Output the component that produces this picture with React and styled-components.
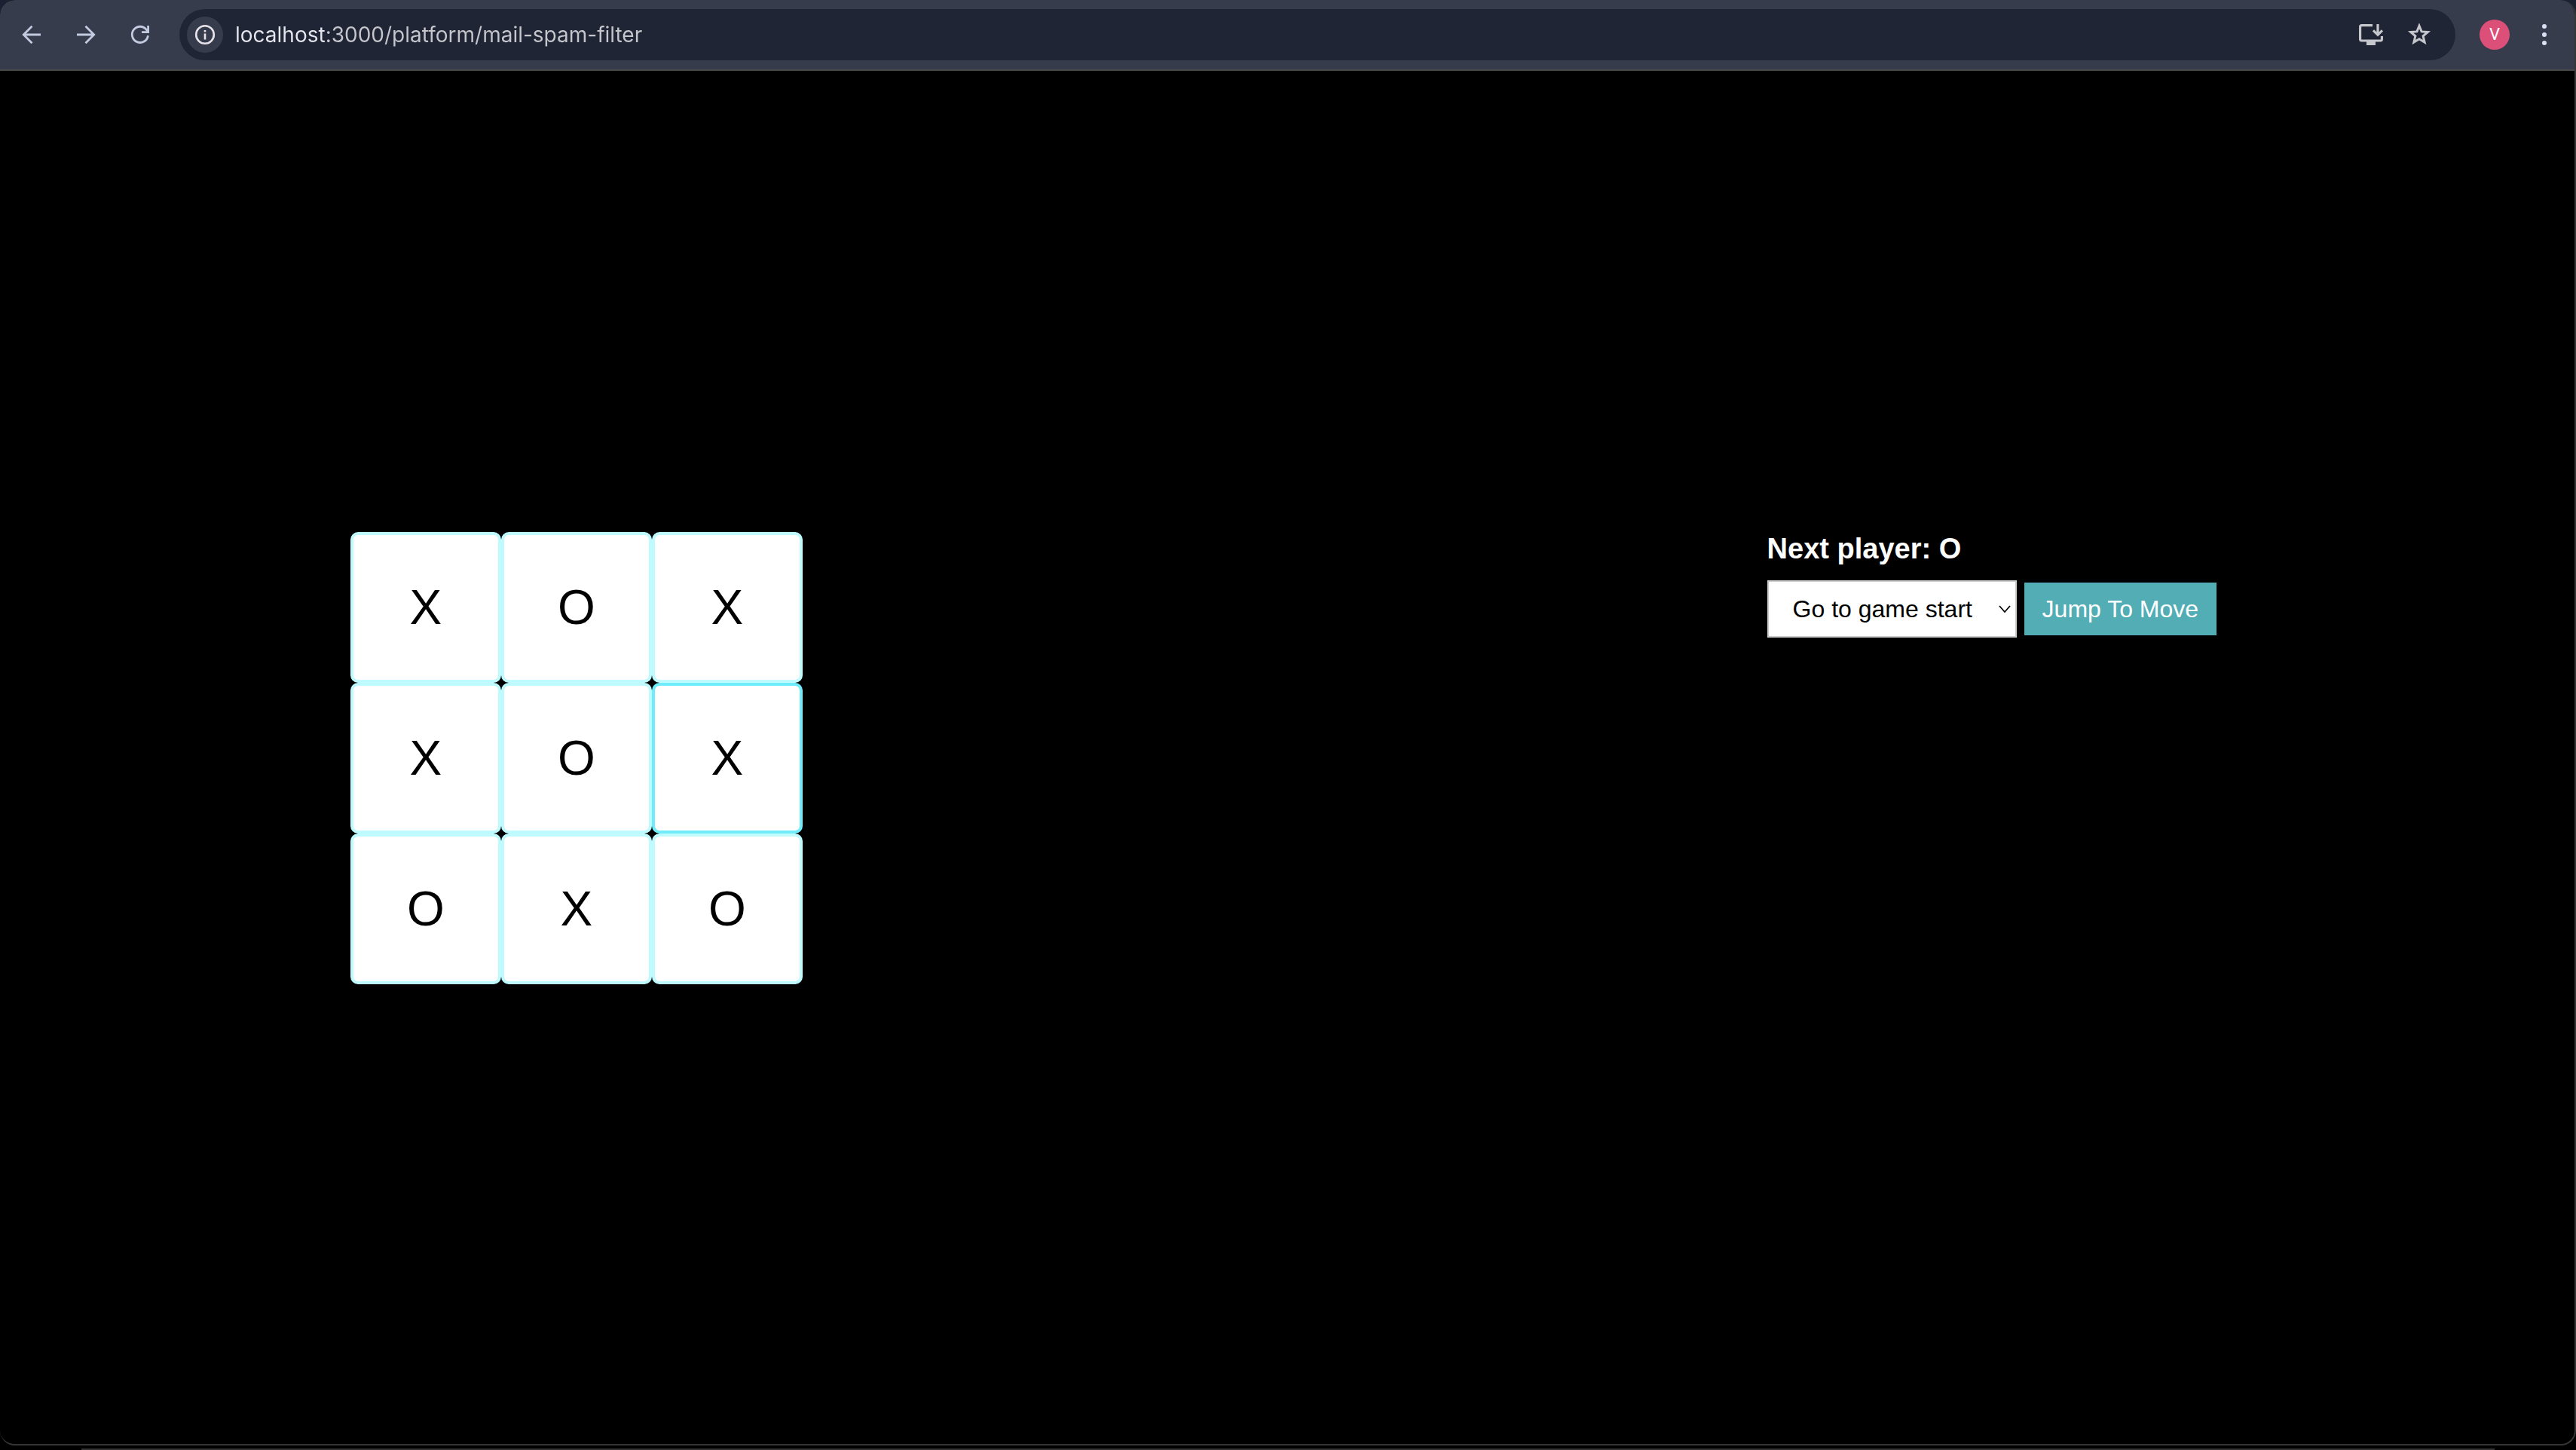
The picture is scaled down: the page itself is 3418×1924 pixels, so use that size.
import React, { useState } from "react";
import styled, { createGlobalStyle } from "styled-components";

const GlobalStyle = createGlobalStyle`
  *, *::before, *::after { box-sizing: border-box; }
  body { margin: 0; background: #000; }
  button, input, select { font: inherit; margin: 0; }
`;

const Desktop = styled.div`
  display: flex;
  flex-direction: column;
  min-height: 100vh;
  background: #000;
  font-family: "Liberation Sans", Arial, sans-serif;
`;

const Backdrop = styled.div`
  flex: 1;
  display: flex;
  background: linear-gradient(#1b2133 0 46px, #000 46px);
`;

const BrowserWindow = styled.div`
  flex: 1;
  display: flex;
  flex-direction: column;
  border: solid #363636;
  border-width: 0 2px 2px 0;
  border-radius: 20px;
  overflow: hidden;
  background: #000;
`;

const Dock = styled.div`
  height: 2px;
  margin: 4px 108px 0;
  background: #333;
`;

const Toolbar = styled.header`
  display: flex;
  align-items: center;
  height: 94px;
  padding: 0 26px 0 18px;
  background: #373c4c;
  border-bottom: 2px solid #48484a;
`;

const IconButton = styled.button`
  display: flex;
  align-items: center;
  justify-content: center;
  width: ${(p) => p.$width || 48}px;
  height: 48px;
  padding: 0;
  border: 0;
  border-radius: 24px;
  background: ${(p) => p.$fill || "transparent"};
  color: ${(p) => p.$color || "#c2cae0"};
  cursor: pointer;
`;

const NavGroup = styled.nav`
  display: flex;
  gap: 24px;
`;

const AddressBar = styled.div`
  flex: 1;
  display: flex;
  align-items: center;
  height: 68px;
  margin: 0 32px 0 28px;
  padding: 0 24px 0 10px;
  border-radius: 34px;
  background: #202535;
`;

const Address = styled.input`
  flex: 1;
  min-width: 0;
  height: 48px;
  padding: 0 0 0 16px;
  border: 0;
  outline: 0;
  font-family: Inter, sans-serif;
  font-size: 28px;
  color: transparent;
  caret-color: #fff;
  background: linear-gradient(90deg, #e6e6ee 135px, #c6c7cc 135px);
  background-clip: text;
  -webkit-background-clip: text;
`;

const AddressActions = styled.div`
  display: flex;
  gap: 16px;
`;

const Avatar = styled.button`
  width: 40px;
  height: 40px;
  margin-right: 32px;
  padding: 0;
  border: 0;
  border-radius: 50%;
  background: #db4f78;
  color: #fff;
  font-family: Roboto, sans-serif;
  font-size: 22px;
  line-height: 40px;
`;

const Game = styled.main`
  flex: 1;
  display: grid;
  grid-template-columns: 465fr auto 1280fr auto 475fr;
  align-content: center;
  padding-top: 2px;
`;

const Board = styled.div`
  grid-column: 2;
  display: grid;
  grid-template-columns: repeat(3, 200px);
  grid-auto-rows: 200px;
`;

const Square = styled.button`
  padding: 0;
  border: 4px solid ${(p) => (p.$active ? "#70edfb" : "#bffaff")};
  border-radius: 10px;
  background: #fff;
  color: #000;
  font-size: 64px;
  line-height: 72px;
  cursor: pointer;
`;

const Info = styled.section`
  grid-column: 4;
`;

const Status = styled.h3`
  margin: 0 0 20px;
  color: #fff;
  font-size: 38px;
  line-height: 44px;
`;

const MoveForm = styled.form`
  display: flex;
  align-items: center;
  gap: 10px;
  font-size: 32px;
`;

const MovePicker = styled.label`
  display: grid;
  align-items: center;
`;

const MoveSelect = styled.select`
  grid-area: 1 / 1;
  appearance: none;
  width: 331px;
  height: 76px;
  padding: 0 56px 0 32px;
  border: 2px solid #ccc;
  border-radius: 0;
  background: #fff;
  color: #000;
`;

const Chevron = styled.svg`
  grid-area: 1 / 1;
  justify-self: end;
  margin-right: 7px;
  pointer-events: none;
`;

const JumpButton = styled.button`
  height: 70px;
  padding: 0 24px;
  border: 0;
  background: #52adb5;
  color: #fff;
  cursor: pointer;
`;

const squares = ["X", "O", "X", "X", "O", "X", "O", "X", "O"];

const ArrowIcon = ({ forward }) => (
  <svg width="28" height="28" viewBox="0 0 28 28" fill="none" stroke="currentColor" strokeWidth="2.8">
    {forward ? (
      <path d="M2 14H25M13.5 2.8L24.7 14L13.5 25.2" />
    ) : (
      <path d="M26 14H3M14.5 2.8L3.3 14L14.5 25.2" />
    )}
  </svg>
);

const ReloadIcon = () => (
  <svg width="28" height="28" viewBox="0 0 28 28" fill="none" stroke="currentColor" strokeWidth="2.8">
    <path d="M24.4 15.2A10.6 10.6 0 1 1 22.3 7.4L24.5 10.2" />
    <path d="M24.6 2V10.6H16" />
  </svg>
);

const InfoIcon = () => (
  <svg width="28" height="28" viewBox="0 0 28 28" fill="none" stroke="currentColor" strokeWidth="2.6">
    <circle cx="14" cy="14" r="11.8" />
    <path d="M14 12.6V20.4M14 8V10.4" />
  </svg>
);

const InstallIcon = () => (
  <svg width="34" height="30" viewBox="0 0 34 30" fill="none" stroke="currentColor" strokeWidth="3.2">
    <path d="M19 2.6H4.6Q2.6 2.6 2.6 4.6V21Q2.6 23 4.6 23H29.4Q31.4 23 31.4 21V17" />
    <path d="M26 1V15M20 9.4L26 15.2L32 9.4" />
    <path d="M11 26.5H23" strokeWidth="5" />
  </svg>
);

const StarIcon = () => (
  <svg width="32" height="32" viewBox="0 0 32 32" fill="none" stroke="currentColor" strokeWidth="3">
    <path d="M16 4.2L19.1 11.9L27.4 12.5L21.1 17.9L23.1 26L16 21.7L8.9 26L10.9 17.9L4.6 12.5L12.9 11.9Z" />
  </svg>
);

const MenuIcon = () => (
  <svg width="8" height="28" viewBox="0 0 8 28" fill="currentColor">
    <circle cx="4" cy="3" r="3" />
    <circle cx="4" cy="14" r="3" />
    <circle cx="4" cy="25" r="3" />
  </svg>
);

export default function App() {
  const [url, setUrl] = useState("localhost:3000/platform/mail-spam-filter");
  return (
    <Desktop>
      <GlobalStyle />
      <Backdrop>
        <BrowserWindow>
          <Toolbar>
            <NavGroup>
              <IconButton aria-label="Back"><ArrowIcon /></IconButton>
              <IconButton aria-label="Forward"><ArrowIcon forward /></IconButton>
              <IconButton aria-label="Reload"><ReloadIcon /></IconButton>
            </NavGroup>
            <AddressBar>
              <IconButton aria-label="Site information" $fill="#373c4c" $color="#e6e3ea"><InfoIcon /></IconButton>
              <Address aria-label="Address" value={url} onChange={(e) => setUrl(e.target.value)} spellCheck={false} />
              <AddressActions>
                <IconButton aria-label="Install app" $color="#c6c7cc"><InstallIcon /></IconButton>
                <IconButton aria-label="Bookmark this page" $color="#c6c7cc"><StarIcon /></IconButton>
              </AddressActions>
            </AddressBar>
            <Avatar aria-label="Profile V">V</Avatar>
            <IconButton aria-label="Menu" $color="#d9dff5" $width={28}><MenuIcon /></IconButton>
          </Toolbar>
          <Game>
            <Board>
              {squares.map((mark, i) => (
                <Square key={i} $active={i === 5}>{mark}</Square>
              ))}
            </Board>
            <Info>
              <Status>Next player: O</Status>
              <MoveForm onSubmit={(e) => e.preventDefault()}>
                <MovePicker>
                  <MoveSelect aria-label="Move">
                    <option>Go to game start</option>
                  </MoveSelect>
                  <Chevron width="18" height="12" viewBox="0 0 18 12" fill="none" stroke="#000" strokeWidth="1.8">
                    <path d="M2 2L9 10L16 2" />
                  </Chevron>
                </MovePicker>
                <JumpButton type="submit">Jump To Move</JumpButton>
              </MoveForm>
            </Info>
          </Game>
        </BrowserWindow>
      </Backdrop>
      <Dock />
    </Desktop>
  );
}
